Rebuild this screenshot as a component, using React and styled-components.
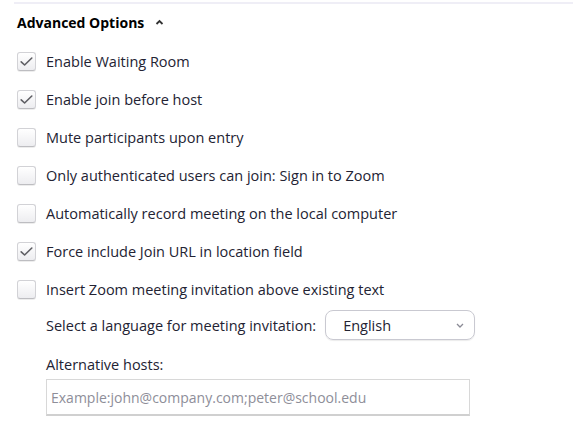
import React from "react";
import styled, { createGlobalStyle } from "styled-components";

const Global = createGlobalStyle`
  html, body { margin: 0; padding: 0; background: #ffffff; }
  body { font-family: "Open Sans", "Noto Sans", sans-serif; color: #232333; }
  * { box-sizing: border-box; }
`;

const Panel = styled.section`
  margin: 2px 14px 0 14px;
  border-top: 2px solid #efeef6;
  padding-left: 3px;
`;

const Title = styled.div`
  height: 37px;
  display: flex;
  align-items: center;
  gap: 11px;
  font-size: 14px;
  font-weight: 700;
  color: #000;
`;

const Caret = styled.svg`
  width: 9px;
  height: 6px;
  margin-top: -2px;
`;

const List = styled.div`
  display: flex;
  flex-direction: column;
  margin-top: 1px;
`;

const Row = styled.label`
  height: 38px;
  display: flex;
  align-items: center;
  gap: 10px;
  font-size: 14.5px;
`;

const Box = styled.span`
  width: 19px;
  height: 19px;
  flex: none;
  border-radius: 3px;
  border: 1px solid #d2d2d6;
  border-bottom-color: #bdbdc1;
  background: linear-gradient(#ffffff, #ededf0);
  box-shadow: 0 1px 0 rgba(0, 0, 0, 0.07);
  display: flex;
  align-items: center;
  justify-content: center;
`;

const Sub = styled.div`
  padding-left: 29px;
`;

const LangRow = styled.div`
  height: 34px;
  display: flex;
  align-items: center;
  gap: 9px;
  font-size: 14.5px;
`;

const Select = styled.div`
  width: 150px;
  height: 30px;
  border: 1px solid #c9c9d1;
  border-radius: 8px;
  box-shadow: 0 1px 1px rgba(0, 0, 0, 0.08);
  display: flex;
  align-items: center;
  justify-content: space-between;
  padding: 0 10px 0 17px;
  color: #232333;
`;

const HostsLabel = styled.div`
  margin-top: 12px;
  height: 20px;
  display: flex;
  align-items: center;
  font-size: 14.5px;
`;

const Input = styled.div`
  margin-top: 5px;
  width: 424px;
  height: 37px;
  border: 1px solid #d8d8d8;
  border-bottom: 2px solid #d0d0d0;
  display: flex;
  align-items: center;
  padding-left: 4px;
  font-size: 14px;
  color: #8e8e99;
`;

const Check = () => (
  <svg width="13" height="11" viewBox="0 0 13 11">
    <path d="M1.2 5.8 L4.6 9 L11.8 2" fill="none" stroke="#5f5f64" strokeWidth="1.6" strokeLinecap="round" strokeLinejoin="round" />
  </svg>
);

const options = [
  ["Enable Waiting Room", true],
  ["Enable join before host", true],
  ["Mute participants upon entry", false],
  ["Only authenticated users can join: Sign in to Zoom", false],
  ["Automatically record meeting on the local computer", false],
  ["Force include Join URL in location field", true],
  ["Insert Zoom meeting invitation above existing text", false],
];

export default function App() {
  return (
    <>
      <Global />
      <Panel>
        <Title>
          Advanced Options
          <Caret viewBox="0 0 9 6">
            <path d="M1.5 5 L4.5 2 L7.5 5" fill="none" stroke="#333" strokeWidth="1.8" />
          </Caret>
        </Title>
        <List>
          {options.map(([text, checked]) => (
            <Row key={text}>
              <Box>{checked && <Check />}</Box>
              {text}
            </Row>
          ))}
        </List>
        <Sub>
          <LangRow>
            Select a language for meeting invitation:
            <Select>
              English
              <svg width="8" height="5" viewBox="0 0 8 5">
                <path d="M1 1 L4 4 L7 1" fill="none" stroke="#8a8a95" strokeWidth="1.3" />
              </svg>
            </Select>
          </LangRow>
          <HostsLabel>Alternative hosts:</HostsLabel>
          <Input>Example:john@company.com;peter@school.edu</Input>
        </Sub>
      </Panel>
    </>
  );
}
